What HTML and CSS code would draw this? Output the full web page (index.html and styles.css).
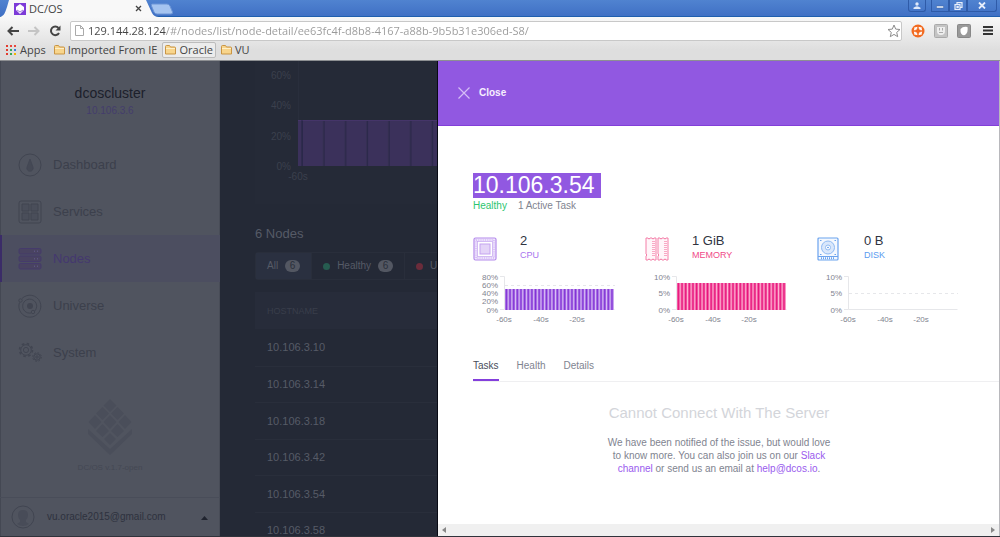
FILE: index.html
```html
<!DOCTYPE html>
<html lang="en">
<head>
<meta charset="utf-8">
<title>DC/OS</title>
<link rel="stylesheet" href="styles.css">
</head>
<body>
<header class="browser">
  <div class="titlebar">
    <div class="tab">
      <svg class="tab-shape" viewBox="0 0 162 17" preserveAspectRatio="none" aria-hidden="true"><path d="M0 17C4 16 5 13 7 7L9 0H146L152 13Q154 17 159 17Z" fill="#f8f8f8"/></svg>
      <svg class="favicon" viewBox="0 0 12 12" aria-hidden="true"><path fill="#7d3bd8" d="M0 0h12v12H0z"/><path fill="#fff" d="M6 1l4 3v3L6 11 2 7V4z"/><path d="M3 7l3 2 3-2" fill="none" stroke="#7d3bd8" stroke-width=".7"/></svg>
      <span class="tab-title">DC/OS</span>
      <button class="plain tab-close" aria-label="Close tab"><svg width="7" height="7" viewBox="0 0 7 7"><path d="M1 1l5 5M6 1L1 6" stroke="#444" stroke-width="1.3"/></svg></button>
    </div>
    <button class="plain new-tab" aria-label="New tab"><svg width="24" height="12" viewBox="0 0 24 12"><path d="M2 1h15q2 0 3 2l2.500 6q.5 2-1.500 2H7q-2 0-3-2L1.500 3Q1 1 2 1z" fill="#a5c4f0" stroke="#6b94d6"/></svg></button>
    <div class="window-buttons">
      <button class="plain winbtn user" aria-label="Profile"><svg width="8" height="7" viewBox="0 0 8 7"><circle cx="4" cy="2" r="1.700" fill="#dfe9fa"/><path d="M.5 7V5.800Q4 2.800 7.500 5.800V7z" fill="#dfe9fa"/></svg></button>
      <button class="plain winbtn" aria-label="Minimize"><svg width="8" height="7" viewBox="0 0 8 7"><path d="M.5 4h7v2h-7z" fill="#e6eefb" stroke="#34588f" stroke-width=".4"/></svg></button>
      <button class="plain winbtn" aria-label="Restore"><svg width="9" height="8" viewBox="0 0 9 8"><path d="M3 2V.7h5v4.600H6.500M1 2.700h5v4.600H1zM3 4.500h1.200v1H3z" fill="none" stroke="#e6eefb" stroke-width="1.200"/></svg></button>
      <button class="plain winbtn wide" aria-label="Close window"><svg width="8" height="7" viewBox="0 0 8 7"><path d="M1 .5l6 6M7 .5l-6 6" stroke="#e6eefb" stroke-width="1.800"/></svg></button>
    </div>
  </div>
  <div class="toolbar">
    <button class="plain" aria-label="Back"><svg width="12" height="10" viewBox="0 0 12 10"><path d="M5.500 1L1.500 5l4 4M2 5h10" fill="none" stroke="#444" stroke-width="2"/></svg></button>
    <button class="plain" aria-label="Forward"><svg width="12" height="10" viewBox="0 0 12 10"><path d="M6.500 1l4 4-4 4M10 5H0" fill="none" stroke="#c4c4c4" stroke-width="2"/></svg></button>
    <button class="plain" aria-label="Reload"><svg width="12" height="12" viewBox="0 0 12 12"><path d="M9.500 3A4.300 4.300 0 1 0 10 8" fill="none" stroke="#444" stroke-width="2"/><path d="M11.500.5v5h-5z" fill="#444"/></svg></button>
    <div class="omnibox">
      <svg width="9" height="11" viewBox="0 0 9 11" aria-hidden="true"><path d="M.5.5h5l3 3v7h-8zM5.500.5v3h3" fill="#fff" stroke="#aaa"/></svg>
      <input class="url" type="text" aria-label="Address" value="129.144.28.124/#/nodes/list/node-detail/ee63fc4f-d8b8-4167-a88b-9b5b31e306ed-S8/">
      <button class="plain" aria-label="Bookmark"><svg width="14" height="14" viewBox="0 0 14 14"><path d="M7 1l1.700 4.100 4.300.4-3.300 2.900 1 4.300L7 10.400l-3.700 2.300 1-4.300L1 5.500l4.300-.4z" fill="#fff" stroke="#8c8c8c"/></svg></button>
    </div>
    <div class="extensions">
      <button class="plain" aria-label="Help extension"><svg width="14" height="14" viewBox="0 0 14 14"><circle cx="7" cy="7" r="6.500" fill="#f26a1f"/><circle cx="7" cy="7" r="3.500" fill="none" stroke="#fff" stroke-width="1.600"/><path d="M7 2v2.800M7 9.200V12M2 7h2.800M9.200 7H12" stroke="#f26a1f" stroke-width="1.400"/><path d="M3.500 3.500l2 2M10.500 3.500l-2 2M3.500 10.500l2-2M10.500 10.500l-2-2" stroke="#fff" stroke-width="1.600"/></svg></button>
      <button class="plain" aria-label="Shield extension"><svg width="14" height="14" viewBox="0 0 14 14"><rect x=".5" y=".5" width="13" height="13" rx="1" fill="#c4c4c4" stroke="#aaa"/><path d="M3 3h8v4q0 4-4 4T3 7z" fill="#eee"/><path d="M5.500 4v2.500M8.500 4v2.500M5 8.500h4" stroke="#aaa"/></svg></button>
      <button class="plain" aria-label="Leaf extension"><svg width="14" height="14" viewBox="0 0 14 14"><rect x=".5" y=".5" width="13" height="13" rx="1" fill="#999" stroke="#888"/><path d="M3.500 5q2.500-3 7-2 1 5-2.500 8-5 1-4.500-6z" fill="#fff"/></svg></button>
      <button class="plain menu" aria-label="Menu"><svg width="10" height="9" viewBox="0 0 10 9"><path d="M0 1h10M0 4.500h10M0 8h10" stroke="#333" stroke-width="2"/></svg></button>
    </div>
  </div>
  <nav class="bookmarks" aria-label="Bookmarks">
    <a href="#"><svg width="11" height="10" viewBox="0 0 11 10"><path d="M1 0v2M1 4v2M1 8v2" stroke="#e23b2e" stroke-width="2"/><path d="M5 0v2M9 0v2" stroke="#e8453c" stroke-width="2"/><path d="M5 4v2M5 8v2" stroke="#3aa757" stroke-width="2"/><path d="M9 4v2" stroke="#3c7de0" stroke-width="2"/><path d="M9 8v2" stroke="#f5b400" stroke-width="2"/></svg>Apps</a>
    <a href="#"><svg width="11" height="10" viewBox="0 0 11 10"><path d="M.5 9V1.500q0-1 1-1h3l1 1.500h4q1 0 1 1V9z" fill="#f8d58c" stroke="#c99544"/><path d="M1 3.500h9" stroke="#fff0c8"/></svg>Imported From IE</a>
    <a href="#" class="raised"><svg width="11" height="10" viewBox="0 0 11 10"><path d="M.5 9V1.500q0-1 1-1h3l1 1.500h4q1 0 1 1V9z" fill="#f8d58c" stroke="#c99544"/><path d="M1 3.500h9" stroke="#fff0c8"/></svg>Oracle</a>
    <a href="#"><svg width="11" height="10" viewBox="0 0 11 10"><path d="M.5 9V1.500q0-1 1-1h3l1 1.500h4q1 0 1 1V9z" fill="#f8d58c" stroke="#c99544"/><path d="M1 3.500h9" stroke="#fff0c8"/></svg>VU</a>
  </nav>
</header>

<div class="app">
  <aside class="sidebar">
    <div class="cluster">
      <div class="cluster-name">dcoscluster</div>
      <div class="cluster-ip">10.106.3.6</div>
    </div>
    <nav class="menu-list" aria-label="Main">
      <a href="#"><svg width="24" height="24" viewBox="0 0 24 24"><circle cx="12" cy="12" r="11" class="ln"/><path d="M12 6l3 8a3.200 3.200 0 1 1-6 0z" fill="#454955" stroke="#414551" stroke-width=".7"/></svg>Dashboard</a>
      <a href="#"><svg width="24" height="24" viewBox="0 0 24 24"><rect x="1" y="1" width="22" height="22" rx="2" class="ln"/><path d="M4 4h7v7H4zM13 4h7v7h-7zM4 13h7v7H4zM13 13h7v7h-7z" fill="#4a4e5a" stroke="#414551"/></svg>Services</a>
      <a href="#" class="active"><svg width="24" height="24" viewBox="0 0 24 24"><g fill="#494361" stroke="#453b6b"><rect x="1" y="1.500" width="22" height="5.500" rx="1.500"/><rect x="1" y="9" width="22" height="5.500" rx="1.500"/><rect x="1" y="16.500" width="22" height="5.500" rx="1.500"/></g><path d="M16 4.200h1M19 4.200h1M16 11.700h1M19 11.700h1M16 19.200h1M19 19.200h1" stroke="#5c5482" stroke-width="1.500"/></svg>Nodes</a>
      <a href="#"><svg width="24" height="24" viewBox="0 0 24 24"><path d="M4 4.500a11 11 0 1 1-2.500 4M16.500 17.200A7 7 0 1 0 13 19" class="ln"/><circle cx="12" cy="12" r="3" fill="#414551"/><circle cx="2.500" cy="6.500" r="1.700" class="ln"/><circle cx="15" cy="18" r="1.700" class="ln"/></svg>Universe</a>
      <a href="#"><svg width="24" height="24" viewBox="0 0 24 24"><circle cx="8" cy="9" r="5.300" class="ln"/><circle cx="8" cy="9" r="6.500" class="ln" stroke-width="1.500" stroke-dasharray="2.550 2.550"/><circle cx="8" cy="9" r="2.600" class="ln"/><circle cx="19" cy="16" r="3.200" class="ln"/><circle cx="19" cy="16" r="4.300" class="ln" stroke-dasharray="1.690 1.690"/><circle cx="19" cy="16" r="1.200" class="ln"/></svg>System</a>
    </nav>
    <div class="brand">
      <svg width="46" height="56" viewBox="0 0 46 56" aria-hidden="true"><g fill="#4a4e5a"><path d="M23 0l6.500 6.500L23 13l-6.500-6.500zM15.500 8l6.500 6.500-6.500 6.500L9 14.500zM30.500 8l6.500 6.500-6.500 6.500-6.500-6.500zM23 16l6.500 7L23 30l-6.500-7zM8 16l6.500 7L8 30l-6.500-7zM38 16l6.500 7L38 30l-6.500-7zM15.500 25l6.500 7-6.500 6-6.500-6zM30.500 25l6.500 7-6.500 6-6.500-6zM23 34l6 6-6 6-6-6z"/><path d="M1 30l22 20 22-20v5L23 56 1 35z"/></g></svg>
      <div>DC/OS v.1.7-open</div>
    </div>
    <button class="plain account">
      <svg width="24" height="24" viewBox="0 0 24 24"><circle cx="12" cy="12" r="11" class="ln"/><path d="M12 5q5 0 5 5 0 3-2 5v2l3 2q-6 4-12 0l3-2v-2q-2-2-2-5 0-5 5-5z" fill="#484c58"/></svg>
      <span>vu.oracle2015@gmail.com</span>
      <svg class="caret" width="7" height="5" viewBox="0 0 7 5"><path d="M0 5l3.500-4L7 5z" fill="#20242f"/></svg>
    </button>
  </aside>

  <main class="content">
    <section class="chart-card">
      <svg width="183" height="143" viewBox="0 0 183 143" role="img" aria-label="Allocation">
        <defs><pattern id="wide" x="48" y="0" width="21.700" height="46" patternUnits="userSpaceOnUse"><path d="M0 0h20.500v46H0z" fill="#3b315b"/><path d="M20.500 0h1.200v46h-1.200z" fill="#2b284a"/></pattern></defs>
        <path d="M43.500 0v59" stroke="#292e3c"/>
        <rect x="43" y="59" width="140" height="46" fill="url(#wide)"/>
        <path d="M43 59.500h140" stroke="#453569"/><path d="M47 59v46" stroke="#2b284a"/>
        <g class="wide-labels" text-anchor="end"><text x="36" y="18">60%</text><text x="36" y="48">40%</text><text x="36" y="79">20%</text><text x="36" y="109">0%</text></g>
        <text class="wide-labels" x="43" y="119" text-anchor="middle">-60s</text>
      </svg>
    </section>
    <h2>6 Nodes</h2>
    <div class="filters">
      <button class="plain selected">All <span class="badge">6</span></button>
      <button class="plain"><i class="dot ok"></i>Healthy <span class="badge">6</span></button>
      <button class="plain"><i class="dot bad"></i>Unhealthy</button>
    </div>
    <table class="nodes">
      <thead><tr><th scope="col">HOSTNAME</th></tr></thead>
      <tbody>
        <tr><td>10.106.3.10</td></tr>
        <tr><td>10.106.3.14</td></tr>
        <tr><td>10.106.3.18</td></tr>
        <tr><td>10.106.3.42</td></tr>
        <tr><td>10.106.3.54</td></tr>
        <tr><td>10.106.3.58</td></tr>
      </tbody>
    </table>
  </main>

  <section class="panel">
    <div class="panel-top">
      <button class="plain close"><svg width="12" height="12" viewBox="0 0 12 12"><path d="M.5.5l11 11M11.500.5l-11 11" stroke="#d5bdf6" stroke-width="1.200"/></svg>Close</button>
    </div>
    <div class="panel-body">
      <h1><span>10.106.3.54</span></h1>
      <div class="status"><span class="healthy">Healthy</span><span>1 Active Task</span></div>
      <div class="metrics">
        <div class="metric cpu">
          <div class="metric-head">
            <svg width="24" height="24" viewBox="0 0 24 24"><rect x="1" y="1" width="22" height="22" rx="1.500" fill="#f3eafd" stroke="#b48aec" stroke-width="1.200"/><rect x="3" y="3" width="18" height="18" fill="none" stroke="#d3baf5" stroke-width="1.500" stroke-dasharray="1 .8"/><rect x="4.500" y="4.500" width="15" height="15" fill="#fff" stroke="#c4a3f0" stroke-width=".7"/><rect x="7" y="7" width="10" height="10" fill="#e4d4f8" stroke="#c4a3f0"/></svg>
            <div><div class="value">2</div><div class="label">CPU</div></div>
          </div>
          <svg width="150" height="68" viewBox="0 0 150 68" role="img" aria-label="CPU usage">
            <defs><pattern id="pc" x="32" y="0" width="3.640" height="68" patternUnits="userSpaceOnUse"><path d="M0 0h3.640v68H0z" fill="#d9bff5"/><path d="M.4 0h2v68H.4z" fill="#8131d6"/></pattern></defs>
            <path d="M27 15.500h4.500v33H27M31.500 48.500h110" class="axis"/><path d="M32 24.500h110" class="axis" stroke-dasharray="3 3"/>
            <rect x="32" y="28" width="109" height="21" fill="url(#pc)"/>
            <g class="tick" text-anchor="end"><text x="25" y="19">80%</text><text x="25" y="27">60%</text><text x="25" y="35">40%</text><text x="25" y="43">20%</text><text x="25" y="52">0%</text></g>
            <g class="tick" text-anchor="middle"><text x="31" y="61">-60s</text><text x="68" y="61">-40s</text><text x="104" y="61">-20s</text></g>
          </svg>
        </div>
        <div class="metric mem">
          <div class="metric-head">
            <svg width="24" height="24" viewBox="0 0 24 24"><g fill="#fff5f9" stroke="#f47ea8"><path d="M1 1h2l1 1.200L5 1h2l1 1.200L9 1h2v22H9l-1-1.200L7 23H5l-1-1.200L3 23H1v-4l1-1-1-1z"/><path d="M13 1h2l1 1.200L17 1h2l1 1.200L21 1h2v22h-2l-1-1.200-1 1.200h-2l-1-1.200-1 1.200h-2v-4l1-1-1-1z"/></g><path d="M8.500 4v16M20.500 4v16" stroke="#f9a9c5" stroke-width="3" stroke-dasharray="1 1"/></svg>
            <div><div class="value">1 GiB</div><div class="label">MEMORY</div></div>
          </div>
          <svg width="150" height="68" viewBox="0 0 150 68" role="img" aria-label="Memory usage">
            <defs><pattern id="pm" x="32" y="0" width="3.640" height="68" patternUnits="userSpaceOnUse"><path d="M0 0h3.640v68H0z" fill="#fdb4d2"/><path d="M.4 0h2v68H.4z" fill="#e8127b"/></pattern></defs>
            <path d="M27 15.500h4.500v33H27M31.500 48.500h110" class="axis"/>
            <rect x="32" y="22" width="109" height="27" fill="url(#pm)"/>
            <g class="tick" text-anchor="end"><text x="25" y="19">10%</text><text x="25" y="35">5%</text><text x="25" y="52">0%</text></g>
            <g class="tick" text-anchor="middle"><text x="31" y="61">-60s</text><text x="68" y="61">-40s</text><text x="104" y="61">-20s</text></g>
          </svg>
        </div>
        <div class="metric disk">
          <div class="metric-head">
            <svg width="24" height="24" viewBox="0 0 24 24"><path d="M2 1h18q1 0 1 1v20q0 1-1 1H2q-1 0-1-1V2q0-1 1-1zM1 19.500h20" fill="#f4f8fe" stroke="#6ba3ee" stroke-width="1.200"/><circle cx="11" cy="10.500" r="6.500" fill="#d9e7fb" stroke="#8fbaf3"/><circle cx="11" cy="10.500" r="2.500" fill="#fff" stroke="#8fbaf3"/><circle cx="11" cy="10.500" r=".8" fill="#4a8de8"/><path d="M3 3.500h1.500M17.500 3.500H19M3 17.500h1.500M17.500 17.500H19" stroke="#6ba3ee"/><path d="M4 21.300h14" stroke="#6ba3ee" stroke-width="2" stroke-dasharray="1 1"/></svg>
            <div><div class="value">0 B</div><div class="label">DISK</div></div>
          </div>
          <svg width="150" height="68" viewBox="0 0 150 68" role="img" aria-label="Disk usage">
            <path d="M27 15.500h4.500v33H27M31.500 48.500h109" class="axis"/><path d="M32 32.500h109" class="axis" stroke-dasharray="3 3"/>
            <g class="tick" text-anchor="end"><text x="25" y="19">10%</text><text x="25" y="35">5%</text><text x="25" y="52">0%</text></g>
            <g class="tick" text-anchor="middle"><text x="31" y="61">-60s</text><text x="68" y="61">-40s</text><text x="104" y="61">-20s</text></g>
          </svg>
        </div>
      </div>
      <div class="tabs" role="tablist">
        <button class="plain on" role="tab" aria-selected="true">Tasks</button>
        <button class="plain" role="tab">Health</button>
        <button class="plain" role="tab">Details</button>
      </div>
      <div class="empty">
        <h3>Cannot Connect With The Server</h3>
        <p>We have been notified of the issue, but would love to know more. You can also join us on our <a href="#">Slack channel</a> or send us an email at <a href="#">help@dcos.io</a>.</p>
      </div>
    </div>
    <div class="scrollbar" aria-hidden="true">
      <svg width="4" height="6" viewBox="0 0 4 6"><path d="M4 0v6L0 3z" fill="#888"/></svg>
      <svg width="4" height="6" viewBox="0 0 4 6"><path d="M0 0v6l4-3z" fill="#888"/></svg>
    </div>
  </section>
</div>
</body>
</html>
```

FILE: styles.css
```css
* { box-sizing: border-box; }
body {
  margin: 0;
  height: 100vh;
  display: flex;
  flex-direction: column;
  overflow: hidden;
  font: 10px/14px "Liberation Sans", Arial, sans-serif;
}
svg { display: block; flex: none; }
a { color: inherit; text-decoration: none; }
h1, h2, h3, p { margin: 0; font-weight: normal; }
.plain {
  border: 0;
  padding: 0;
  margin: 0;
  background: none;
  color: inherit;
  font: inherit;
}

/* Browser frame */
.browser {
  flex: none;
  background: linear-gradient(#f8f8f8 17px, #dedede 50px);
  border-bottom: 1px solid #8d8f92;
  font: 11px/14px "Open Sans", "Noto Sans", sans-serif;
  color: #444;
}
.titlebar {
  height: 17px;
  display: flex;
  background: linear-gradient(#5083d0, #3f6fc4);
  box-shadow: inset 0 -1px #1f5fae;
}
.tab {
  position: relative;
  width: 150px;
  height: 17px;
  padding: 0 8px 0 14px;
  display: flex;
  align-items: center;
  gap: 3px;
}
.tab-shape { position: absolute; inset: 0 auto auto 0; width: 162px; height: 17px; }
.favicon { position: relative; width: 12px; height: 12px; }
.tab-title { position: relative; flex: 1; }
.tab-close { position: relative; }
.new-tab { position: relative; }
.window-buttons { margin-left: auto; display: flex; height: 12px; padding-right: 3px; }
.winbtn {
  width: 18px;
  display: flex;
  justify-content: center;
  align-items: center;
  border: 1px solid #2f5ba8;
  border-top: 0;
}
.winbtn.user { margin-right: 5px; border-radius: 0 0 3px 3px; }
.winbtn.wide { width: 30px; border-radius: 0 0 3px 0; }
.toolbar {
  height: 25px;
  display: flex;
  align-items: center;
  padding: 2px 7px 0 7px;
  gap: 9px;
}
.omnibox {
  flex: 1;
  height: 20px;
  display: flex;
  align-items: center;
  gap: 4px;
  padding: 0 0 0 4px;
  background: #fff;
  border: 1px solid #c8c8c8;
  border-radius: 2px;
}
.url {
  flex: 1;
  min-width: 0;
  border: 0;
  padding: 0;
  outline: 0;
  font: inherit;
  color: transparent;
  background: linear-gradient(90deg, #444 78px, #999 78px);
  -webkit-background-clip: text;
  background-clip: text;
}
.extensions { display: flex; align-items: center; gap: 9px; }
.extensions .menu { padding-left: 3px; }
.bookmarks { height: 18px; display: flex; align-items: center; padding: 0 0 2px 6px; gap: 8px; }
.bookmarks a { display: flex; align-items: center; gap: 3px; }
.bookmarks .raised {
  border: 1px solid #bcbcbc;
  border-radius: 2px;
  background: #ececec;
  padding: 0 2px;
  margin: 0 -3px;
}

/* Application */
.app { flex: 1; min-height: 0; display: grid; grid-template-columns: 22% 1fr 56.2%; border-bottom: 1px solid #30333b; }

.sidebar { background: #50545f; color: #3c404c; display: flex; flex-direction: column; min-height: 0; box-shadow: inset 1px 0 #444853, inset -1px 0 #484c57; }
.ln { fill: none; stroke: #414551; }
.cluster { height: 80px; padding-top: 23px; text-align: center; }
.cluster-name { font-size: 14px; line-height: 18px; color: #1c202b; }
.cluster-ip { color: #443d6c; line-height: 18px; }
.menu-list a { height: 47px; display: flex; align-items: center; gap: 11px; padding-left: 18px; font-size: 13px; }
.menu-list .active { background: #4c4e60; color: #44386f; box-shadow: inset 2px 0 #3b2c68; }
.brand { flex: 1; display: flex; flex-direction: column; align-items: center; padding-top: 23px; gap: 6px; font-size: 8px; color: #444854; }
.account { height: 39px; display: flex; align-items: center; gap: 12px; padding: 0 12px 0 11px; border-top: 1px solid #494d59; color: #2e323e; }
.account .caret { margin-left: auto; }

.content { background: #242936; border-right: 1px solid #080a14; color: #565b67; padding-left: 35px; overflow: hidden; white-space: nowrap; }
.chart-card { height: 143px; background: #252a37; overflow: hidden; }
.wide-labels { fill: #3b404d; font-size: 10px; }
.content h2 { margin-top: 21px; font-size: 13px; line-height: 18px; }
.filters { display: flex; width: 260px; height: 28px; margin-top: 9px; border: 1px solid #292e3b; border-radius: 3px; }
.filters button { display: flex; align-items: center; gap: 7px; padding: 0 11px; border-right: 1px solid #292e3b; }
.filters .selected { background: #2a3040; }
.badge { width: 15px; height: 12px; border-radius: 6px; background: #535762; color: #2a2f3b; line-height: 12px; text-align: center; }
.dot { width: 7px; height: 7px; border-radius: 50%; }
.ok { background: #265c50; }
.bad { background: #6b2c3b; }
.nodes { width: 100%; margin-top: 12px; border-collapse: collapse; }
.nodes th { height: 37px; padding: 0 12px; text-align: left; font-size: 9px; font-weight: normal; color: #393e4b; background: #272c3a; }
.nodes td { height: 37px; padding: 0 12px; border-bottom: 1px solid #292e3b; font-size: 11px; }
.nodes tr:nth-child(even) td { height: 36px; }

.panel { background: #fff; display: flex; flex-direction: column; min-width: 0; min-height: 0; border-right: 1px solid #b8b8bc; }
.panel-top { height: 65px; flex: none; background: #9158e1; border-bottom: 1px solid #823fd8; display: flex; align-items: center; padding-left: 20px; }
.close { display: flex; align-items: center; gap: 9px; color: #f6effe; font-weight: bold; }
.panel-body { flex: 1; min-height: 0; overflow: hidden; padding: 47px 0 0 35px; color: #7f8490; }
h1 { font-size: 23px; line-height: 25px; color: #fff; }
h1 span { display: inline-block; padding-right: 6px; background: #9158e1; }
.status { margin-top: 1px; display: flex; gap: 11px; }
.healthy { color: #2cc56f; }
.metrics { margin-top: 20px; display: grid; grid-template-columns: repeat(3, 1fr); padding-right: 10px; }
.metric-head { display: flex; align-items: flex-end; gap: 23px; height: 28px; }
.value { font-size: 13px; line-height: 16px; color: #30343f; }
.label { font-size: 9px; line-height: 12px; }
.cpu .label { color: #a873ee; }
.mem .label { color: #f04a88; }
.disk .label { color: #5b9bf0; }
.axis { fill: none; stroke: #e6e7ea; }
.tick { fill: #7f8490; font-size: 8px; }
.tabs { margin-top: 30px; display: flex; gap: 18px; border-bottom: 1px solid #efeff1; }
.tabs button { padding-bottom: 6px; border-bottom: 2px solid transparent; }
.tabs .on { color: #484d5a; border-color: #843fdc; }
.empty { margin: 22px 34px 0 0; display: flex; flex-direction: column; align-items: center; text-align: center; }
.empty h3 { font-size: 15px; line-height: 18px; color: #d3d5da; }
.empty p { margin-top: 14px; max-width: 230px; line-height: 13px; }
.empty a { color: #9a5bee; }
.scrollbar { flex: none; height: 12px; background: #f0f0f0; display: flex; align-items: center; justify-content: space-between; padding: 0 4px; }
```
